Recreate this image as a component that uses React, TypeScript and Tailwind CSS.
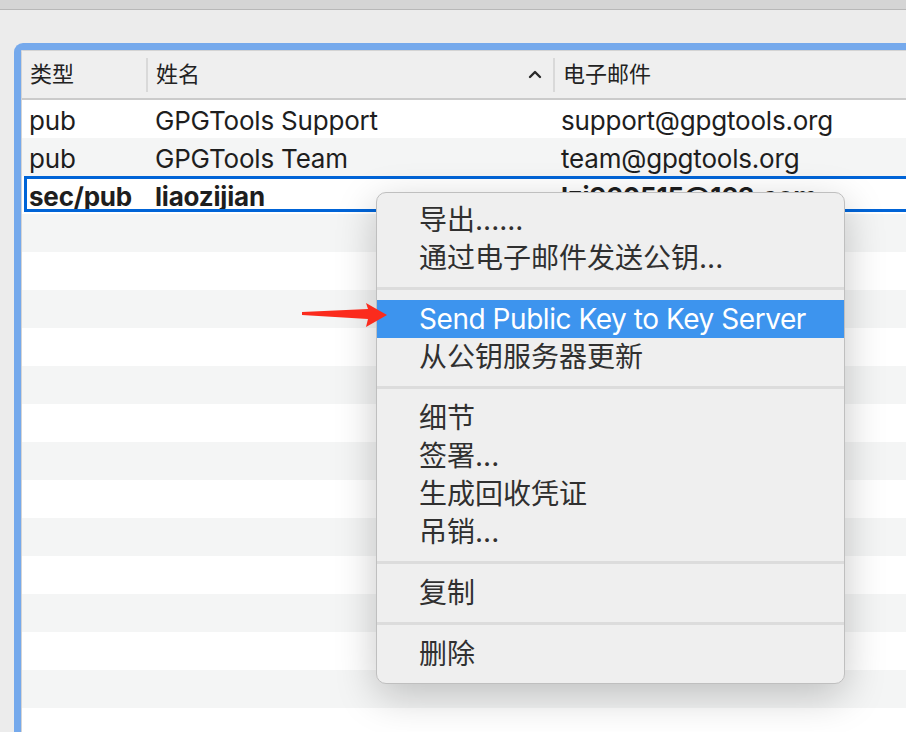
import React from 'react';

type Key = { type: string; name: string; email: string; selected?: boolean };

const keys: Key[] = [
  { type: 'pub', name: 'GPGTools Support', email: 'support@gpgtools.org' },
  { type: 'pub', name: 'GPGTools Team', email: 'team@gpgtools.org' },
  { type: 'sec/pub', name: 'liaozijian', email: 'lzj960515@163.com', selected: true },
];

type MenuEntry = { label: string; active?: boolean } | 'sep';

const menu: MenuEntry[] = [
  { label: '导出......' },
  { label: '通过电子邮件发送公钥...' },
  'sep',
  { label: 'Send Public Key to Key Server', active: true },
  { label: '从公钥服务器更新' },
  'sep',
  { label: '细节' },
  { label: '签署...' },
  { label: '生成回收凭证' },
  { label: '吊销...' },
  'sep',
  { label: '复制' },
  'sep',
  { label: '删除' },
];

const font = { fontFamily: "Inter, 'Noto Sans CJK SC', sans-serif" };

function HeaderCell({ label, width, caret }: { label: string; width?: string; caret?: boolean }) {
  return (
    <div className={`flex items-center h-full ${width ?? 'flex-1'} pl-[8px] pr-[11px]`}>
      <span className="text-[22px] text-[#222] flex-1">{label}</span>
      {caret && (
        <svg width="14" height="10" viewBox="0 0 14 10" className="mb-[2px]">
          <path d="M2 8 L7 3 L12 8" fill="none" stroke="#2a2a2a" strokeWidth="2.4" strokeLinecap="round" strokeLinejoin="round" />
        </svg>
      )}
    </div>
  );
}

function Divider() {
  return <div className="w-[2px] h-[34px] bg-[#d9d9d9] shrink-0" />;
}

export default function App() {
  const rows = Array.from({ length: 17 }, (_, i) => keys[i]);

  return (
    <div className="relative w-[906px] h-[732px] overflow-hidden bg-[#ececec]" style={font}>
      <div className="h-[10px] bg-[#d5d5d5] border-b border-[#b8b8b8]" />

      <div className="pt-[33px] pl-[14px]">
        {/* table with focus ring */}
        <div className="w-[920px] h-[700px] border-t-[7px] border-l-[7px] border-[#75a9ec] rounded-tl-[9px] overflow-hidden">
          <div className="h-full border-t border-l border-[#d4d4d4] bg-white">
            <div className="flex items-center h-[49px] bg-[#efefef] border-b-2 border-[#cbcbcb]">
              <HeaderCell label="类型" width="w-[124px]" />
              <Divider />
              <HeaderCell label="姓名" width="w-[405px]" caret />
              <Divider />
              <HeaderCell label="电子邮件" />
            </div>

            {rows.map((k, i) => (
              <div
                key={i}
                className={`relative flex items-center h-[38px] text-[26px] tracking-[-0.2px] text-[#1e1e1e] ${i % 2 === 1 ? 'bg-[#f4f5f5]' : 'bg-white'} ${k?.selected ? 'font-bold' : ''}`}
              >
                {k && (
                  <>
                    <div className="w-[126px] pl-[7px] pt-[2px] whitespace-nowrap">{k.type}</div>
                    <div className="w-[407px] pl-[7px] pt-[2px] whitespace-nowrap">{k.name}</div>
                    <div className="flex-1 pl-[6px] pt-[2px] whitespace-nowrap">{k.email}</div>
                  </>
                )}
                {k?.selected && (
                  <div className="absolute left-[2px] top-0 right-[-10px] h-[36px] border-[3px] border-[#0064d7]" />
                )}
              </div>
            ))}
          </div>
        </div>
      </div>

      {/* context menu */}
      <div className="absolute left-[376px] top-[192px] w-[469px] rounded-[10px] border border-[#bfbfbf] bg-[#efefef] pt-[8px] pb-[10px] overflow-hidden shadow-[0_12px_40px_rgba(0,0,0,0.22)]">
        {menu.map((m, i) =>
          m === 'sep' ? (
            <div key={i} className="h-[23px] flex items-center">
              <div className="w-full h-[3px] bg-[#dcdcdc]" />
            </div>
          ) : (
            <div
              key={i}
              className={`h-[38px] flex items-center pl-[42px] text-[28px] whitespace-nowrap ${m.active ? 'bg-[#3d94ee] text-white tracking-[-0.45px]' : 'text-[#303030]'}`}
            >
              {m.label}
            </div>
          )
        )}
      </div>

      {/* annotation arrow, drawn over the menu */}
      <svg className="absolute left-[300px] top-[300px]" width="90" height="30" viewBox="0 0 90 30">
        <polygon points="2,12 68,9 66,3 87,15 66,27 68,19 2,15" fill="#fb2b1d" />
      </svg>
    </div>
  );
}
